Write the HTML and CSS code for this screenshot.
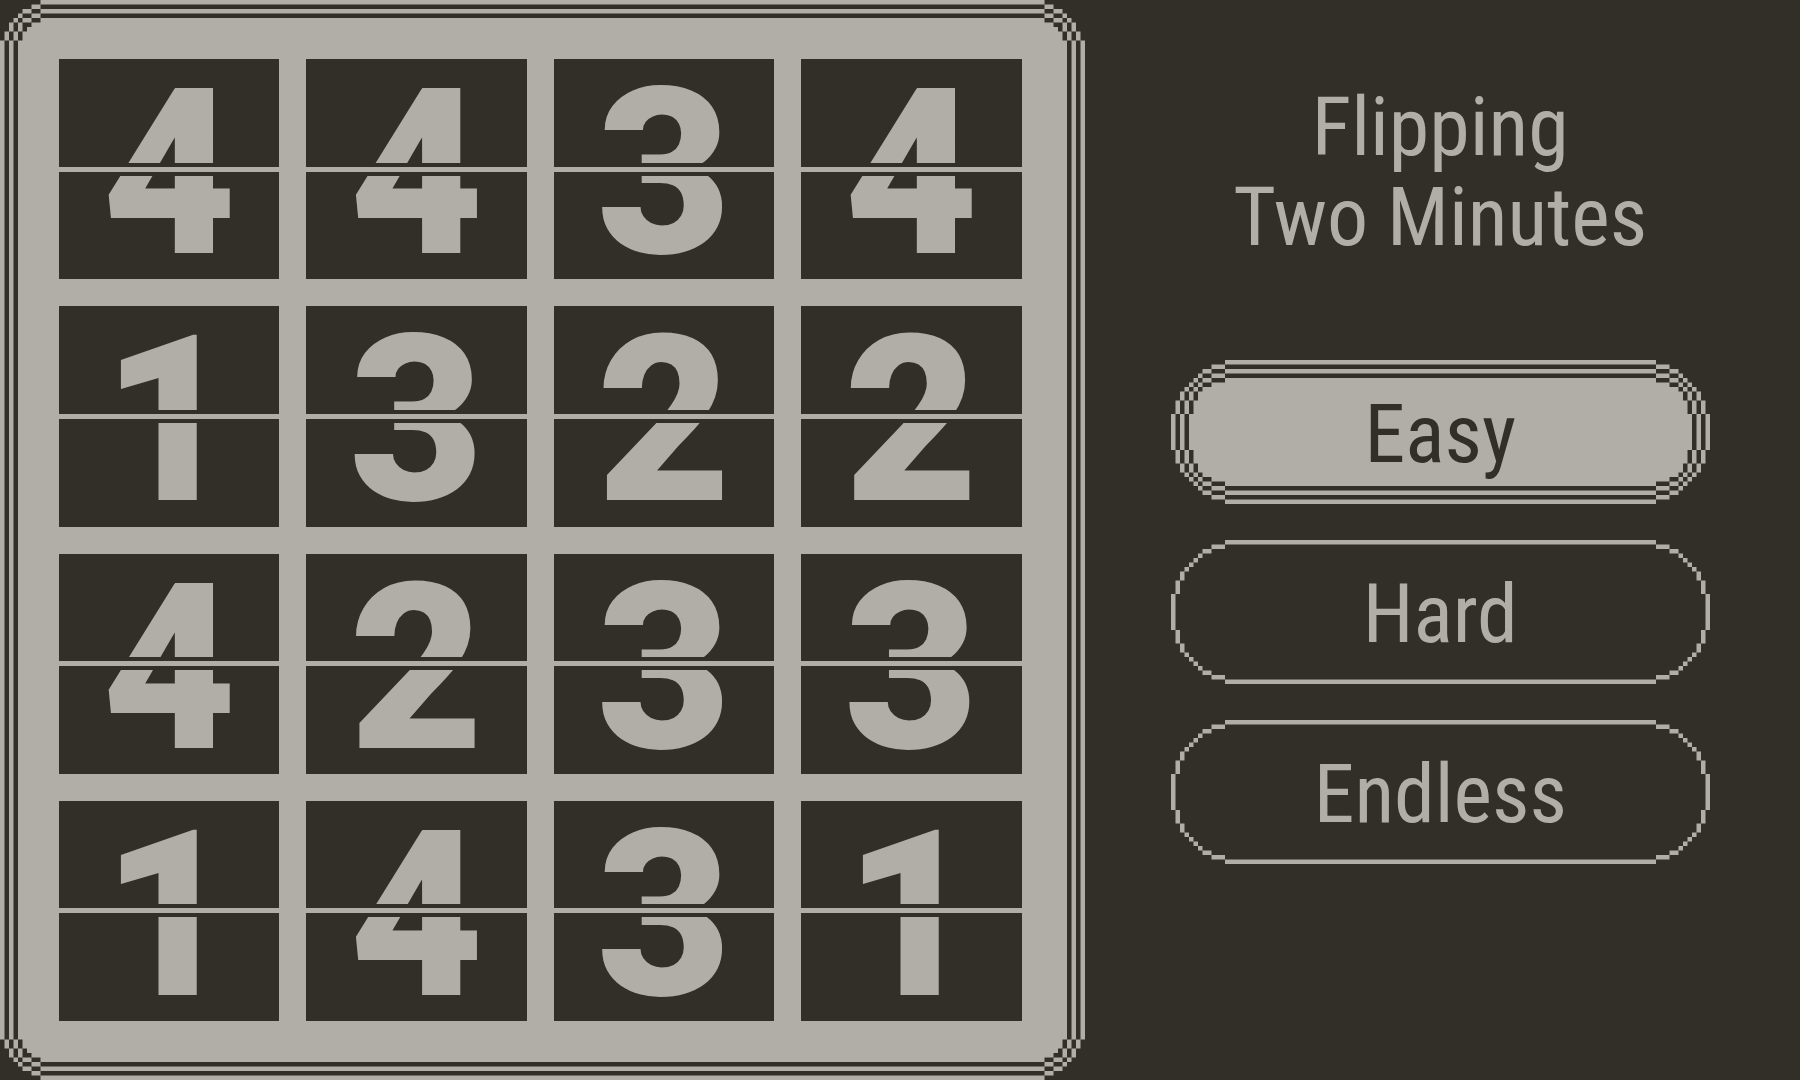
FILE: index.html
```html
<!DOCTYPE html>
<html lang="en">
<head>
<meta charset="utf-8">
<meta name="viewport" content="width=device-width, initial-scale=1">
<title>Flipping Two Minutes</title>
<link rel="stylesheet" href="styles.css">
</head>
<body>
<main class="screen">
  <section class="board" aria-label="Board">
    <div class="tile">4</div>
    <div class="tile">4</div>
    <div class="tile">3</div>
    <div class="tile">4</div>
    <div class="tile">1</div>
    <div class="tile">3</div>
    <div class="tile">2</div>
    <div class="tile">2</div>
    <div class="tile">4</div>
    <div class="tile">2</div>
    <div class="tile">3</div>
    <div class="tile">3</div>
    <div class="tile">1</div>
    <div class="tile">4</div>
    <div class="tile">3</div>
    <div class="tile">1</div>
  </section>
  <section class="menu">
    <h1 class="title">Flipping<br>Two Minutes</h1>
    <nav class="modes" aria-label="Mode">
      <button class="mode mode-selected" type="button">Easy</button>
      <button class="mode" type="button">Hard</button>
      <button class="mode" type="button">Endless</button>
    </nav>
  </section>
</main>
</body>
</html>
```
FILE: styles.css
```css
:root {
  --ink: #322e28;
  --paper: #b1aea7;
}

*,
*::after {
  box-sizing: border-box;
}

body {
  margin: 0;
  background: var(--ink);
  color: var(--paper);
  font-family: "Roboto Condensed", "Liberation Sans Narrow", "Liberation Sans", sans-serif;
}

.screen {
  display: grid;
  grid-template-columns: minmax(0, 241fr) minmax(0, 159fr);
  min-height: 100vh;
}

/* The frame is a stepped triple outline, nine-sliced from a small drawing. */
.board {
  display: grid;
  grid-template-columns: repeat(4, minmax(0, 1fr));
  grid-template-rows: repeat(4, minmax(0, 1fr));
  gap: 27px;
  padding: 14px 18px 14px 14px;
  border: 45px solid transparent;
  border-image: url("data:image/svg+xml,%3Csvg xmlns='http://www.w3.org/2000/svg' width='99' height='99' viewBox='0 0 22 22'%3E%3Cpath fill='%23b1aea7' d='M9 0h4v22h-4zM7 1h8v20h-8zM5 2h12v18h-12zM4 3h14v16h-14zM3 4h16v14h-16zM2 5h18v12h-18zM1 7h20v8h-20zM0 9h22v4h-22z'/%3E%3Cpath fill='%23322e28' d='M9 1h4v20h-4zM7 2h8v18h-8zM5 3h12v16h-12zM4 4h14v14h-14zM3 5h16v12h-16zM2 7h18v8h-18zM1 9h20v4h-20z'/%3E%3Cpath fill='%23b1aea7' d='M9 2h4v18h-4zM7 3h8v16h-8zM5 4h12v14h-12zM4 5h14v12h-14zM3 7h16v8h-16zM2 9h18v4h-18z'/%3E%3Cpath fill='%23322e28' d='M9 3h4v16h-4zM7 4h8v14h-8zM5 5h12v12h-12zM4 7h14v8h-14zM3 9h16v4h-16z'/%3E%3Cpath fill='%23b1aea7' d='M9 4h4v14h-4zM7 5h8v12h-8zM6 6h10v10h-10zM5 7h12v8h-12zM4 9h14v4h-14z'/%3E%3C/svg%3E") 45 fill / 45px stretch;
}

.tile {
  position: relative;
  display: flex;
  align-items: center;
  justify-content: center;
  padding-top: 10px;
  background: var(--ink);
  font-family: Roboto, "Liberation Sans", sans-serif;
  font-size: 232px;
  font-weight: 900;
  line-height: 210px;
}

/* Hinge across the middle of a flip tile. */
.tile::after {
  content: "";
  position: absolute;
  inset: 0;
  height: 13px;
  margin: auto 0;
  border-block: 4px solid var(--ink);
  background: var(--paper);
}

.menu {
  padding: 82px 90px 0 86px;
}

.title {
  margin: 0 0 98px;
  font-size: 82px;
  font-weight: 400;
  line-height: 90px;
  text-align: center;
}

.modes {
  display: flex;
  flex-direction: column;
  gap: 36px;
}

.mode {
  height: 144px;
  padding: 4px 0 0;
  border: 54px solid transparent;
  border-block-width: 0;
  border-image: url("data:image/svg+xml,%3Csvg xmlns='http://www.w3.org/2000/svg' width='144' height='144' viewBox='0 0 32 32'%3E%3Cpath fill='%23b1aea7' d='M12 0h8v32h-8zM9 1h14v30h-14zM7 2h18v28h-18zM6 3h20v26h-20zM5 4h22v24h-22zM4 5h24v22h-24zM3 6h26v20h-26zM2 7h28v18h-28zM1 9h30v14h-30zM0 12h32v8h-32z'/%3E%3Cpath fill='%23322e28' d='M12 1h8v30h-8zM9 2h14v28h-14zM7 3h18v26h-18zM6 4h20v24h-20zM5 5h22v22h-22zM4 6h24v20h-24zM3 7h26v18h-26zM2 9h28v14h-28zM1 12h30v8h-30z'/%3E%3C/svg%3E") 54 fill / 54px stretch;
  background: none;
  color: var(--paper);
  font: inherit;
  font-size: 82px;
  line-height: 90px;
  cursor: pointer;
}

.mode-selected {
  border-image-source: url("data:image/svg+xml,%3Csvg xmlns='http://www.w3.org/2000/svg' width='144' height='144' viewBox='0 0 32 32'%3E%3Cpath fill='%23b1aea7' d='M12 0h8v32h-8zM9 1h14v30h-14zM7 2h18v28h-18zM6 3h20v26h-20zM5 4h22v24h-22zM4 5h24v22h-24zM3 6h26v20h-26zM2 7h28v18h-28zM1 9h30v14h-30zM0 12h32v8h-32z'/%3E%3Cpath fill='%23322e28' d='M12 1h8v30h-8zM9 2h14v28h-14zM7 3h18v26h-18zM6 4h20v24h-20zM5 5h22v22h-22zM4 6h24v20h-24zM3 7h26v18h-26zM2 9h28v14h-28zM1 12h30v8h-30z'/%3E%3Cpath fill='%23b1aea7' d='M12 2h8v28h-8zM9 3h14v26h-14zM7 4h18v24h-18zM6 5h20v22h-20zM5 6h22v20h-22zM4 7h24v18h-24zM3 9h26v14h-26zM2 12h28v8h-28z'/%3E%3Cpath fill='%23322e28' d='M12 3h8v26h-8zM9 4h14v24h-14zM7 5h18v22h-18zM6 6h20v20h-20zM5 7h22v18h-22zM4 9h24v14h-24zM3 12h26v8h-26z'/%3E%3Cpath fill='%23b1aea7' d='M12 4h8v24h-8zM9 5h14v22h-14zM7 6h18v20h-18zM6 7h20v18h-20zM5 9h22v14h-22zM4 12h24v8h-24z'/%3E%3C/svg%3E");
  color: var(--ink);
}
```
